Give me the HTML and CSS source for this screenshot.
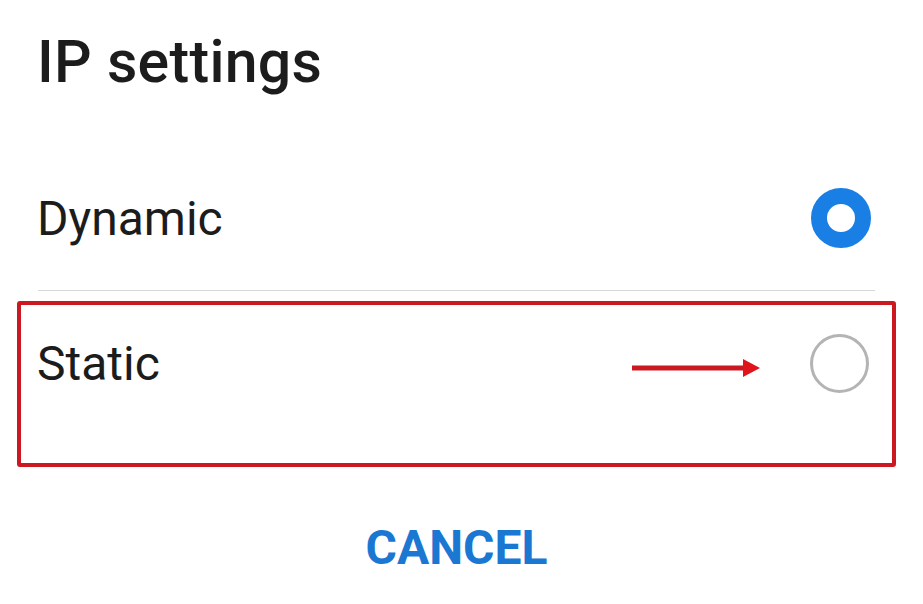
FILE: index.html
```html
<!DOCTYPE html>
<html>
<head>
<meta charset="utf-8">
<link rel="stylesheet" href="styles.css">
</head>
<body>
<div class="dialog">
  <h1 class="title">IP settings</h1>
  <div class="option option-first">
    <span class="label">Dynamic</span>
    <span class="radio radio-on"></span>
  </div>
  <div class="divider"></div>
  <div class="highlight">
    <div class="option option-second">
      <span class="label">Static</span>
      <svg class="arrow" width="130" height="20" viewBox="0 0 130 20">
        <line x1="0" y1="10" x2="114" y2="10" stroke="#cc1820" stroke-width="5"/>
        <polygon points="111,1 128,10 111,19" fill="#e0141c"/>
      </svg>
      <span class="radio radio-off"></span>
    </div>
  </div>
  <div class="actions">
    <span class="cancel">CANCEL</span>
  </div>
</div>
</body>
</html>
```
FILE: styles.css
```css
html, body {
  margin: 0;
  padding: 0;
  background: #ffffff;
}
.dialog {
  width: 923px;
  height: 604px;
  font-family: Roboto, "Noto Sans", sans-serif;
  color: #1c1c1c;
  position: relative;
}
.title {
  margin: 0;
  padding: 22px 0 0 37px;
  font-size: 59px;
  font-weight: 500;
  line-height: 80px;
  letter-spacing: 0.3px;
}
.option {
  display: flex;
  align-items: center;
  padding: 0 52px 0 37px;
}
.option-first {
  margin-top: 76px;
  height: 80px;
}
.label {
  font-size: 48px;
  flex: 1;
}
.radio {
  width: 60px;
  height: 60px;
  border-radius: 50%;
  box-sizing: border-box;
}
.radio-on {
  border: 16px solid #1a7fe4;
}
.radio-off {
  border: 3px solid #b4b4b4;
  width: 59px;
  height: 59px;
}
.divider {
  margin: 32px 48px 0 38px;
  height: 1px;
  background: #d8d8d8;
}
.highlight {
  margin: 10px 27px 0 17px;
  height: 158px;
  border: 4px solid #cc1820;
  border-radius: 3px;
}
.option-second {
  padding: 26px 23px 0 16px;
  height: 65px;
}
.arrow {
  margin-right: 48px;
  margin-top: 8px;
}
.actions {
  display: flex;
  justify-content: center;
  margin-top: 52px;
}
.cancel {
  font-family: Roboto, "Liberation Sans", sans-serif;
  font-weight: 700;
  font-size: 48px;
  color: #1a77d2;
  margin-right: 10px;
}
```
